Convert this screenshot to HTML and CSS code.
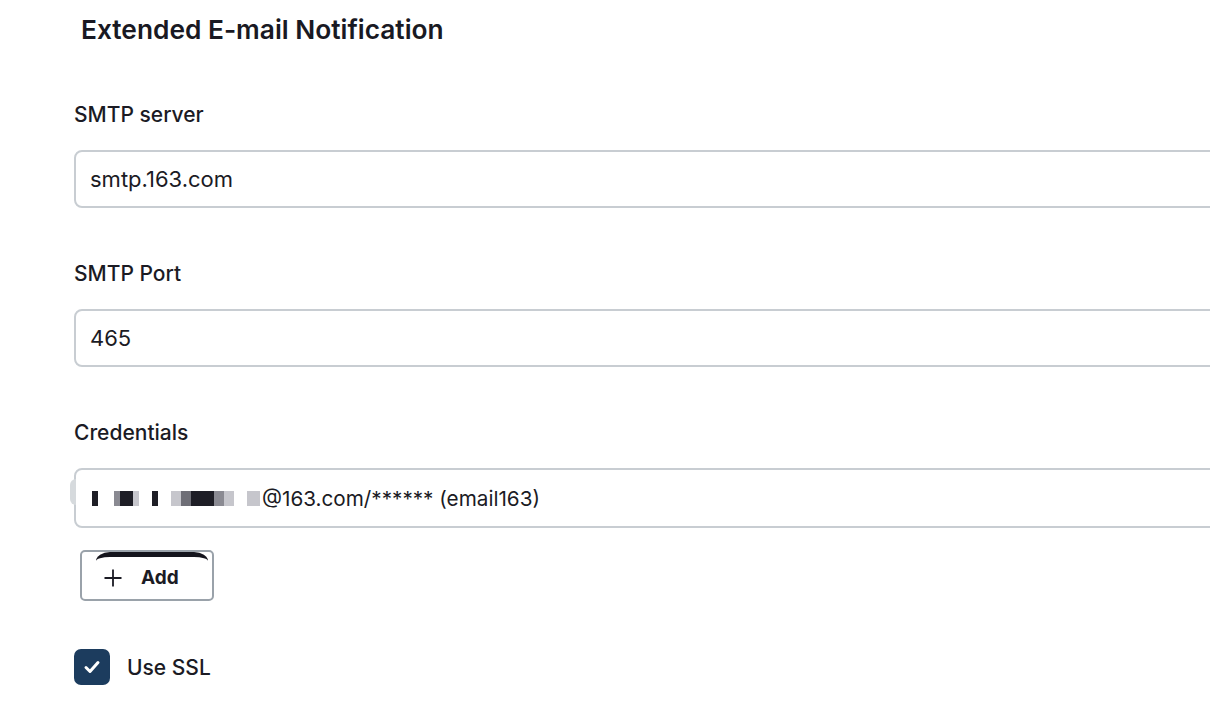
FILE: index.html
```html
<!DOCTYPE html>
<html lang="en">
<head>
<meta charset="utf-8">
<title>Extended E-mail Notification</title>
<link rel="stylesheet" href="styles.css">
</head>
<body>
<div class="page">
  <h1 class="title">Extended E-mail Notification</h1>

  <div class="field">
    <label class="label">SMTP server</label>
    <div class="input">smtp.163.com</div>
  </div>

  <div class="field">
    <label class="label">SMTP Port</label>
    <div class="input">465</div>
  </div>

  <div class="field cred">
    <label class="label">Credentials</label>
    <div class="input select">
      <span class="bump"></span>
      <span class="redact">
        <i class="b k w4 gap1"></i><i class="b g w4"></i><i class="b k w8"></i><i class="b l w4 gap"></i><i class="b k w4 gap"></i><i class="b l w6"></i><i class="b m w6"></i><i class="b k w6"></i><i class="b k w8"></i><i class="b g w6"></i><i class="b l w6 gap"></i><i class="b l w8"></i>
      </span><span class="cred-text">@163.com/****** (email163)</span>
    </div>
    <button class="add-btn"><span class="arc"></span>
      <svg class="plus" width="20" height="20" viewBox="0 0 20 20"><path d="M10 1.5v17M1.5 10h17" stroke="#1b1b24" stroke-width="1.8" fill="none"/></svg>
      <span>Add</span></button>
  </div>

  <div class="check-row">
    <span class="checkbox">
      <svg width="22" height="22" viewBox="0 0 22 22"><path d="M5 11.5l4 4 8-9" fill="none" stroke="#fff" stroke-width="3" stroke-linecap="round" stroke-linejoin="round"/></svg>
    </span>
    <span class="check-label">Use SSL</span>
  </div>
</div>
</body>
</html>
```
FILE: styles.css
```css
html, body {
  margin: 0;
  padding: 0;
  background: #fff;
  overflow: hidden;
}
body {
  font-family: Inter, "Noto Sans", sans-serif;
  color: #1b1b24;
  width: 1210px;
  height: 712px;
}
.page {
  padding: 13px 0 0 74px;
}
.title {
  margin: 0 0 55px 7px;
  font-size: 26.3px;
  line-height: 33px;
  font-weight: 600;
  color: #191923;
}
.field {
  display: flex;
  flex-direction: column;
  margin-bottom: 52px;
}
.label {
  font-size: 21px;
  line-height: 28px;
  font-weight: 500;
  margin-bottom: 21px;
}
.input {
  box-sizing: border-box;
  width: 1180px;
  height: 58px;
  border: 2.5px solid #c8cdd2;
  border-radius: 8px;
  padding: 0 14px;
  display: flex;
  align-items: center;
  font-size: 22px;
  color: #1b1b24;
  position: relative;
}
.select {
  height: 60px;
}
.cred-text {
  font-size: 20.7px;
}
.bump {
  position: absolute;
  left: -6px;
  top: 9px;
  width: 6px;
  height: 26px;
  background: #d6dadd;
  border-radius: 6px 0 0 6px;
}
.redact {
  display: inline-flex;
  align-items: center;
  height: 20px;
  margin-left: 2px;
  margin-right: 2px;
}
.b {
  display: inline-block;
  height: 15px;
}
.b.k { background: #1e1e26; }
.b.g { background: #8a8a92; }
.b.m { background: #6e6e76; }
.b.l { background: #c6c6cc; }
.w4 { width: 6px; }
.w6 { width: 10px; }
.w8 { width: 13px; }
.gap1 { margin-right: 16px; }
.gap { margin-right: 13px; }
.cred .input {
  margin-bottom: 22px;
}
.add-btn {
  position: relative;
  box-sizing: border-box;
  align-self: flex-start;
  margin-left: 6px;
  width: 134px;
  height: 51px;
  border: 2.5px solid #9aa2aa;
  border-radius: 5px;
  background: #fff;
  display: flex;
  align-items: center;
  padding: 4px 0 0 21px;
  font-family: inherit;
  font-size: 19px;
  font-weight: 700;
  color: #1b1b24;
  gap: 18px;
}
.plus {
  flex: none;
}
.arc {
  position: absolute;
  left: 14px;
  top: 0px;
  width: 112px;
  height: 12px;
  border-top: 5px solid #14141c;
  border-radius: 14px 14px 0 0 / 9px 9px 0 0;
  box-sizing: border-box;
}
.check-row {
  display: flex;
  align-items: center;
  gap: 17px;
  margin-top: -4px;
}
.checkbox {
  width: 36px;
  height: 36px;
  border-radius: 7px;
  background: #1c3c5e;
  display: flex;
  align-items: center;
  justify-content: center;
}
.check-label {
  font-size: 21px;
  font-weight: 500;
}
```
